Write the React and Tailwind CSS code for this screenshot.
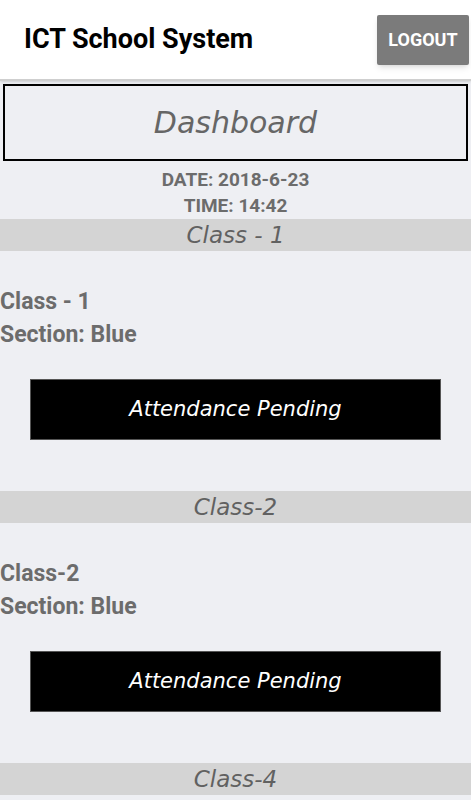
const casual = { fontFamily: '"Comic Sans MS", "DejaVu Sans", sans-serif' };

const classes = [
  { bar: 'Class - 1', name: 'Class - 1', section: 'Blue' },
  { bar: 'Class-2', name: 'Class-2', section: 'Blue' },
];

function ClassBar({ label }) {
  return (
    <div
      className="h-[32px] flex items-center justify-center bg-[#d4d4d4] text-[#616161] text-[23px] italic"
      style={casual}
    >
      {label}
    </div>
  );
}

function ClassBlock({ item }) {
  return (
    <div className="flex flex-col">
      <ClassBar label={item.bar} />
      <div className="flex flex-col pt-[34px] text-[23px] font-bold text-[#6c6c6c] leading-[33px]">
        <span>{item.name}</span>
        <span>Section: {item.section}</span>
      </div>
      <div className="px-[30px] pt-[28px] pb-[51px]">
        <button
          className="w-full h-[61px] bg-black text-white text-[21px] italic border border-[#555]"
          style={casual}
        >
          Attendance Pending
        </button>
      </div>
    </div>
  );
}

export default function App() {
  return (
    <div
      className="h-[800px] w-[471px] bg-[#eeeff3] overflow-hidden"
      style={{ fontFamily: 'Roboto, "Liberation Sans", sans-serif' }}
    >
      <header className="h-[81px] bg-white flex items-center pl-[24px] border-b-2 border-[#cfcfcf] shadow-sm">
        <h1 className="text-[27px] font-bold text-black">ICT School System</h1>
        <button className="ml-auto mr-[2px] h-[50px] w-[92px] bg-[#7b7b7b] text-white text-[18px] font-bold rounded-[2px] shadow-md">
          LOGOUT
        </button>
      </header>

      <div className="px-[3px] pt-[3px]">
        <div
          className="h-[77px] border-2 border-black flex items-center justify-center text-[30px] italic text-[#666]"
          style={casual}
        >
          Dashboard
        </div>
      </div>

      <div className="flex flex-col items-center pt-[6px] text-[19px] font-bold text-[#6c6c6c] leading-[26px]">
        <span>DATE: 2018-6-23</span>
        <span>TIME: 14:42</span>
      </div>

      {classes.map((c) => (
        <ClassBlock key={c.bar} item={c} />
      ))}
      <ClassBar label="Class-4" />
    </div>
  );
}
